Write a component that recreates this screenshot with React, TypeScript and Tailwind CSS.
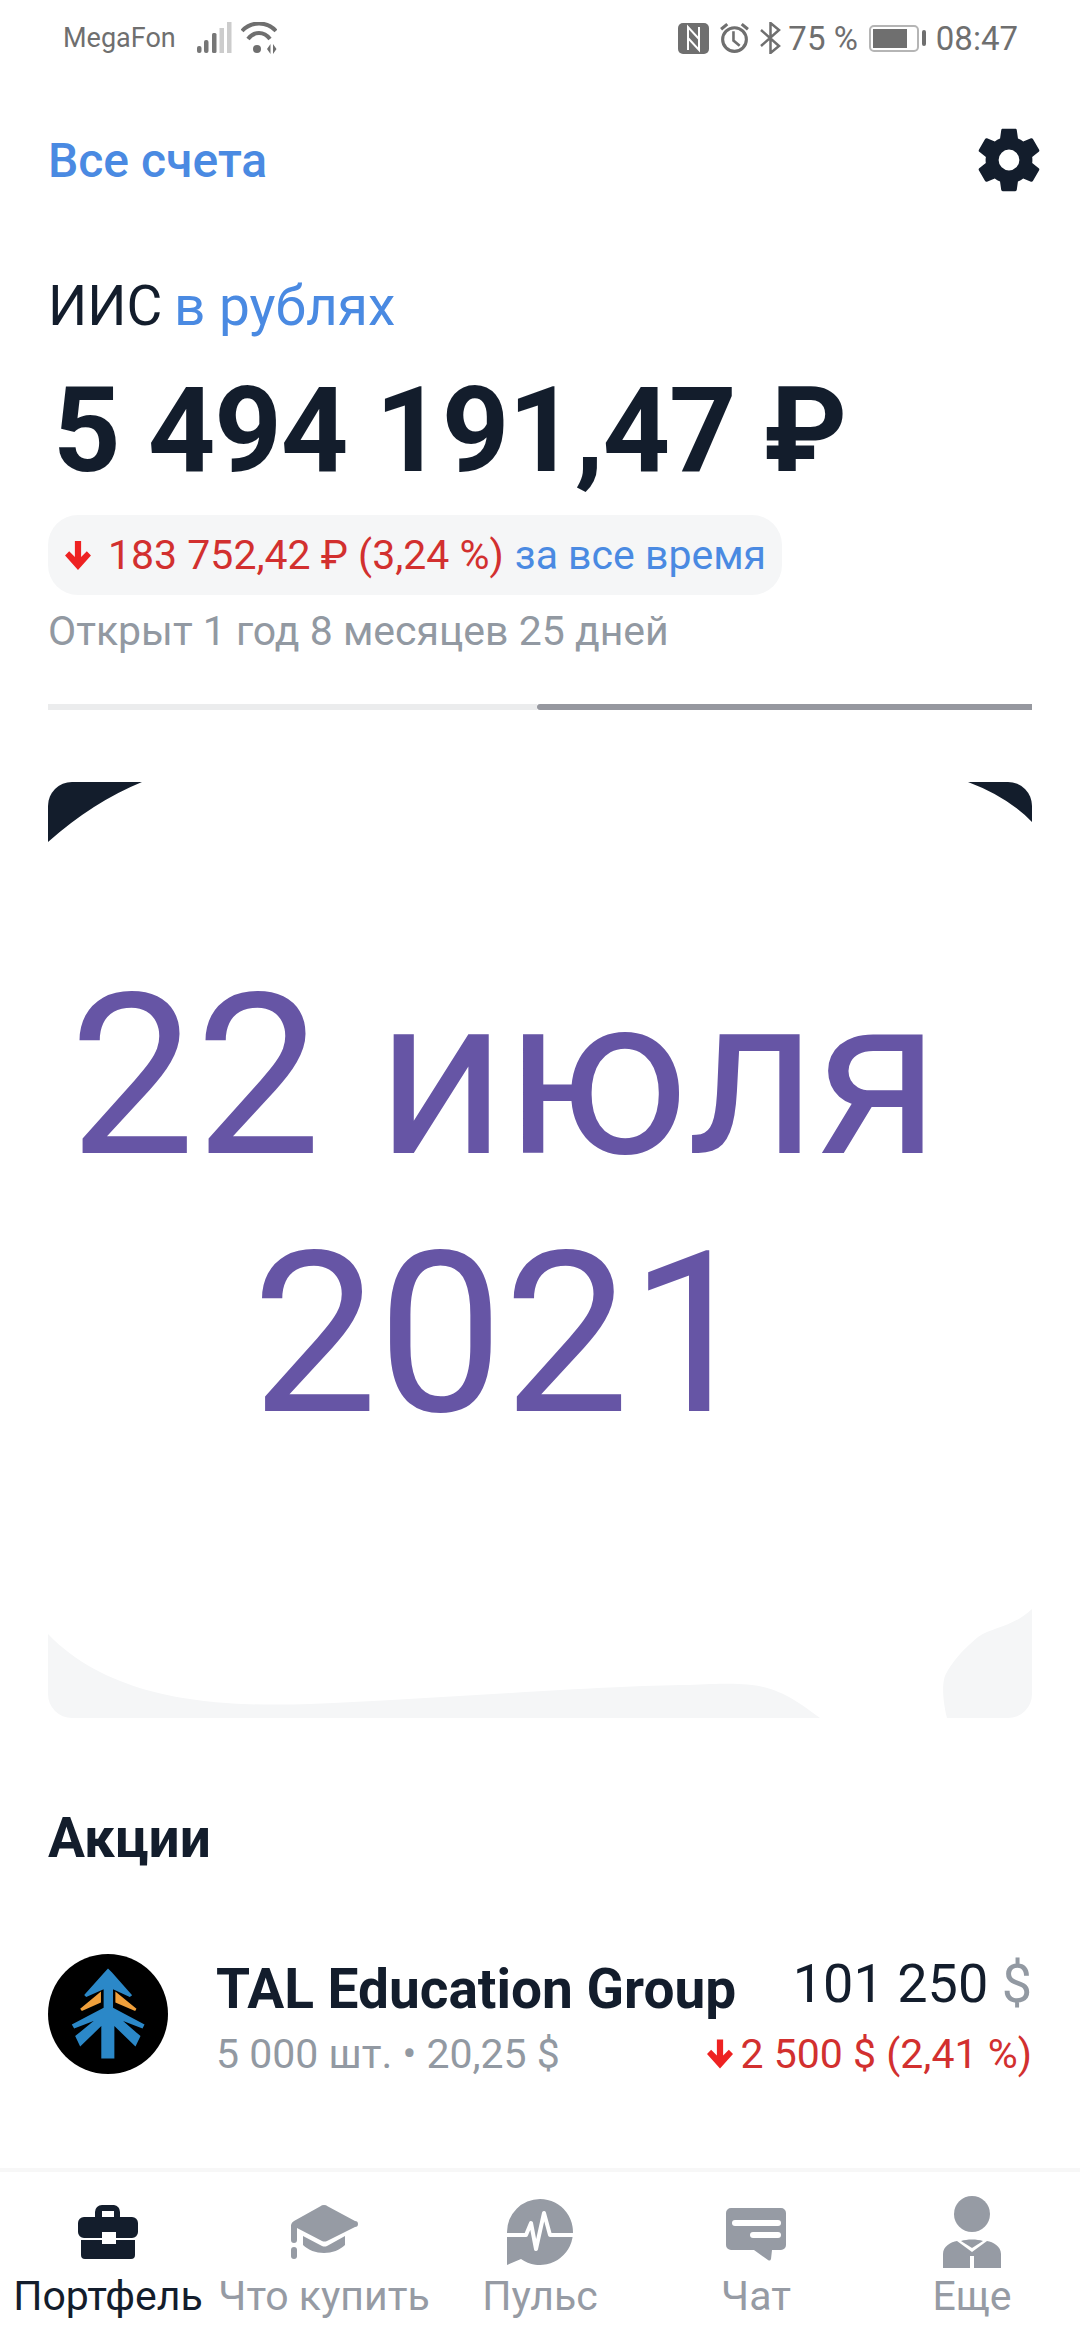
import type { ReactNode } from "react";

const DownArrow = ({ className }: { className: string }) => (
  <svg viewBox="0 0 25 28" className={className} fill="#ee2222">
    <path d="M9.500 0h6v15.500l5.500-5.500 4 4L12.500 28 0 14l4-4 5.500 5.500z" />
  </svg>
);

function StatusBar() {
  return (
    <div className="flex h-[76px] items-center justify-between pl-[63px] pr-[62px] text-[#6f6f6f]">
      <div className="flex items-center">
        <span className="text-[27px] leading-none">MegaFon</span>
        <svg viewBox="0 0 36 32" className="ml-[21px] h-[32px] w-[36px]">
          <rect x="0" y="24" width="4.500" height="7" rx="2" fill="#777" />
          <rect x="7" y="18" width="4.500" height="13" rx="2" fill="#777" />
          <rect x="15" y="11" width="4.500" height="20" rx="1.500" fill="#777" />
          <rect x="22.500" y="6" width="4.500" height="25" fill="#ccc" />
          <rect x="30" y="0" width="4.500" height="31" fill="#ccc" />
        </svg>
        <svg viewBox="0 0 36 32" className="ml-[8px] h-[32px] w-[36px]" fill="none">
          <path d="M1 9C10 -1 26 -1 35 9" stroke="#6f6f6f" strokeWidth="4" />
          <path d="M7 17C13 9 23 9 29 17" stroke="#6f6f6f" strokeWidth="4" />
          <circle cx="16" cy="27" r="4" fill="#6f6f6f" />
          <path d="M26 27l3.500-5v10zM32 22l3.500 5-3.500 5z" fill="#6f6f6f" />
        </svg>
      </div>
      <div className="flex items-center">
        <svg viewBox="0 0 31 31" className="h-[31px] w-[31px]" fill="none">
          <rect width="31" height="31" rx="5" fill="#6f6f6f" />
          <path d="M10 27V4L21 16M21 4V27L10 15" stroke="#fff" strokeWidth="2" />
        </svg>
        <svg viewBox="0 0 30 31" className="ml-[9px] h-[32px] w-[33px]" fill="none" stroke="#6f6f6f">
          <circle cx="15" cy="17" r="11.500" strokeWidth="3" />
          <path d="M14 9v9l6 5" strokeWidth="2.500" />
          <path d="M2 7l6-5M28 7l-6-5" strokeWidth="3" />
        </svg>
        <svg viewBox="0 0 21 32" className="ml-[9px] h-[32px] w-[21px]" fill="none" stroke="#6f6f6f" strokeWidth="2.500">
          <path d="M1 8l18 16-8.500 7V1L19 8 1 24" />
        </svg>
        <span className="ml-[7px] text-[33px] leading-none">75 %</span>
        <div className="ml-[11px] flex h-[27px] w-[50px] items-center rounded-[5px] border-2 border-[#b5b5b5] p-[2px]">
          <div className="h-full w-[34px] bg-[#6f6f6f]" />
        </div>
        <div className="ml-[3px] h-[16px] w-[4px] rounded-[2px] bg-[#6f6f6f]" />
        <span className="ml-[10px] text-[33px] leading-none">08:47</span>
      </div>
    </div>
  );
}

function BalanceBlock() {
  return (
    <section className="px-12">
      <div className="mt-[52px] flex h-[64px] items-center justify-between">
        <span className="pt-[2px] text-[48px] leading-none font-medium text-[#4a8ae2]">Все счета</span>
        <svg viewBox="0 0 24 24" className="-mr-[16px] h-[78px] w-[78px]" fill="#131d2c">
          <path d="M19.140 12.940c.04-.3.06-.61.06-.94 0-.32-.02-.64-.07-.94l2.030-1.580c.18-.14.23-.41.12-.61l-1.920-3.320c-.12-.22-.37-.29-.59-.22l-2.390.96c-.5-.38-1.030-.7-1.620-.94l-.36-2.540c-.04-.24-.24-.41-.48-.41h-3.840c-.24 0-.43.17-.47.41l-.36 2.540c-.59.24-1.130.57-1.620.94l-2.390-.96c-.22-.08-.47 0-.59.22L2.740 8.870c-.12.21-.08.47.12.61l2.030 1.580c-.05.3-.09.63-.09.94s.02.64.07.94l-2.030 1.580c-.18.14-.23.41-.12.61l1.920 3.320c.12.22.37.29.59.22l2.390-.96c.5.38 1.030.7 1.620.94l.36 2.540c.05.24.24.41.48.41h3.840c.24 0 .44-.17.47-.41l.36-2.540c.59-.24 1.130-.56 1.620-.94l2.390.96c.22.08.47 0 .59-.22l1.920-3.320c.12-.22.07-.47-.12-.61l-2.010-1.580zM12 15.200a3.200 3.200 0 1 1 0-6.400 3.200 3.200 0 0 1 0 6.400z" />
        </svg>
      </div>
      <div className="mt-[84px] text-[55px] leading-[60px] text-[#131d2c]">
        ИИС <span className="-ml-[2px] text-[#4a8ae2]">в рублях</span>
      </div>
      <div className="mt-[30px] ml-[5px] text-[118px] leading-[130px] font-bold tracking-[-1.200px] whitespace-nowrap text-[#131d2c]">
        5 494 191,47 ₽
      </div>
      <div className="mt-[19px] flex h-[80px] w-[734px] items-center rounded-[30px] bg-[#f5f6f7] pl-[17px] text-[41px] leading-none">
        <DownArrow className="h-[29px] w-[26px]" />
        <span className="ml-[17px] text-[#d2302f]">183 752,42 ₽ (3,24 %)</span>
        <span className="ml-[11px] text-[#4a8ae2]">за все время</span>
      </div>
      <div className="mt-[12px] text-[41px] leading-[48px] text-[#9299a2]">Открыт 1 год 8 месяцев 25 дней</div>
      <div className="mt-[49px] flex h-[6px]">
        <div className="w-[489px] bg-[#ebeced]" />
        <div className="flex-1 rounded-l-[3px] bg-[#96989f]" />
      </div>
    </section>
  );
}

function StoryCard() {
  return (
    <div className="relative mx-12 mt-[72px] flex h-[936px] flex-col items-center overflow-hidden rounded-[24px] bg-white">
      <svg viewBox="0 0 984 936" className="absolute inset-0 h-full w-full">
        <path d="M0 0H94Q45 20 0 60Z" fill="#131d2c" />
        <path d="M920 0H984V40Q960 15 920 0Z" fill="#131d2c" />
        <path d="M0 852C70 925 190 924 262 922C390 917 560 903 641 903C710 900 725 900 772 936H0Z" fill="#f5f6f7" />
        <path d="M984 827C965 845 945 845 930 855C912 870 905 880 899 890C892 900 896 925 899 936H984Z" fill="#f5f6f7" />
      </svg>
      <div className="relative mt-[166px] text-center text-[224px] leading-[258px] whitespace-nowrap text-[#6655a5]">
        <div className="mr-[71px]">22 июля</div>
        <div className="mr-[73px]">2021</div>
      </div>
    </div>
  );
}

function TalLogo() {
  return (
    <svg viewBox="54 40 358 358" className="h-[120px] w-[120px] shrink-0">
      <circle cx="233" cy="219" r="179" fill="#000" />
      <path
        d="M233 83L245 95L305 163L298 168L248 145V200L342 250L336 262L278 240L330 285L315 316L252 255V352H213V255L150 316L135 285L190 240L132 262L125 250L220 200V145L168 168L162 162L222 95Z"
        fill="#2b88c8"
      />
      <path d="M212 152V185L155 210L150 203ZM255 152L318 203L314 210L255 185Z" fill="#f0a03c" />
    </svg>
  );
}

function StocksBlock() {
  return (
    <section className="px-12">
      <h2 className="mt-[90px] text-[55px] leading-[60px] font-bold text-[#131d2c]">Акции</h2>
      <div className="mt-[86px] flex items-start">
        <TalLogo />
        <div className="ml-[48px] min-w-0 flex-1 pt-[5px]">
          <div className="text-[55px] leading-[60px] font-bold whitespace-nowrap text-[#131d2c]">TAL Education Group</div>
          <div className="mt-[11px] text-[41px] leading-[48px] text-[#9299a2]">5 000 шт. • 20,25 $</div>
        </div>
        <div className="shrink-0 text-right">
          <div className="text-[54px] leading-[60px] whitespace-nowrap text-[#131d2c]">
            101 250 <span className="text-[#9299a2]">$</span>
          </div>
          <div className="mt-[16px] flex items-center justify-end text-[41px] leading-[48px] whitespace-nowrap text-[#d2302f]">
            <DownArrow className="mr-[8px] h-[32px] w-[26px]" />
            2 500 $ (2,41 %)
          </div>
        </div>
      </div>
    </section>
  );
}

const BriefcaseIcon = () => (
  <svg viewBox="0 0 60 54" className="mb-[9px] h-[54px] w-[60px]" fill="#131d2c">
    <path d="M17 12V7a7 7 0 0 1 7-7h12a7 7 0 0 1 6 7v5h12a6 6 0 0 1 6 6v9a6 6 0 0 1-6 6H38v-6H24v6H6a6 6 0 0 1-6-6v-9a6 6 0 0 1 6-6zM24 6v6h12V6z" fillRule="evenodd" />
    <path d="M3 35h21v4h14v-4h19v15a4 4 0 0 1-4 4H7a4 4 0 0 1-4-4z" />
  </svg>
);

const CapIcon = () => (
  <svg viewBox="0 0 67 54" className="mb-[9px] h-[54px] w-[67px]" fill="#969ba4">
    <path d="M29 1.500a7 7 0 0 1 8 0L64 16a3 3 0 0 1 0 6L36 36a6 6 0 0 1-5 0L6 23v12a3 3 0 0 1-6 0V22a6 6 0 0 1 3-6z" />
    <path d="M12 31l19 10a6 6 0 0 0 5 0l18-10v9c-5 5-13 8-21 8s-16-3-21-8z" />
    <rect x="0" y="42" width="6" height="12" rx="3" />
  </svg>
);

const PulseIcon = () => (
  <svg viewBox="0 0 66 66" className="mb-[3px] h-[66px] w-[66px]">
    <path d="M33 0a33 33 0 1 1-19 60L0 66V33A33 33 0 0 1 33 0z" fill="#969ba4" />
    <path d="M0 36H19L24 24L29 50L37 14L43 36H66" fill="none" stroke="#fff" strokeWidth="4" strokeLinejoin="round" />
  </svg>
);

const ChatIcon = () => (
  <svg viewBox="0 0 60 54" className="mb-[6px] h-[54px] w-[60px]" fill="#969ba4">
    <path d="M5 0h50a5 5 0 0 1 5 5v32a5 5 0 0 1-5 5H46l-1 9a2 2 0 0 1-3 1L28 42H5a5 5 0 0 1-5-5V5a5 5 0 0 1 5-5z" />
    <rect x="6" y="12" width="49" height="6" rx="3" fill="#fff" />
    <rect x="24" y="24" width="31" height="6" rx="3" fill="#fff" />
  </svg>
);

const PersonIcon = () => (
  <svg viewBox="0 0 58 72" className="h-[72px] w-[58px]" fill="#969ba4">
    <circle cx="29" cy="18" r="18" />
    <path d="M0 72V58C0 50 8 46 14 45L29 56L44 45C50 46 58 50 58 58V72H31V60H27V72Z" />
    <path d="M18 45C24 43 34 43 40 45L29 52Z" />
  </svg>
);

function NavItem({ icon, label, active }: { icon: ReactNode; label: string; active?: boolean }) {
  return (
    <div className="flex flex-col items-center">
      <div className="flex h-[74px] items-end">{icon}</div>
      <span className={`mt-[4px] text-[41px] leading-[48px] whitespace-nowrap ${active ? "text-[#131d2c]" : "text-[#969ba4]"}`}>
        {label}
      </span>
    </div>
  );
}

export default function App() {
  return (
    <div className="flex h-[2340px] w-[1080px] flex-col overflow-hidden bg-white font-['Roboto',sans-serif]">
      <main className="flex-1">
        <StatusBar />
        <BalanceBlock />
        <StoryCard />
        <StocksBlock />
      </main>
      <nav className="grid h-[172px] grid-cols-5 border-t-4 border-[#f7f7f7] pt-[22px]">
        <NavItem icon={<BriefcaseIcon />} label="Портфель" active />
        <NavItem icon={<CapIcon />} label="Что купить" />
        <NavItem icon={<PulseIcon />} label="Пульс" />
        <NavItem icon={<ChatIcon />} label="Чат" />
        <NavItem icon={<PersonIcon />} label="Еще" />
      </nav>
    </div>
  );
}
